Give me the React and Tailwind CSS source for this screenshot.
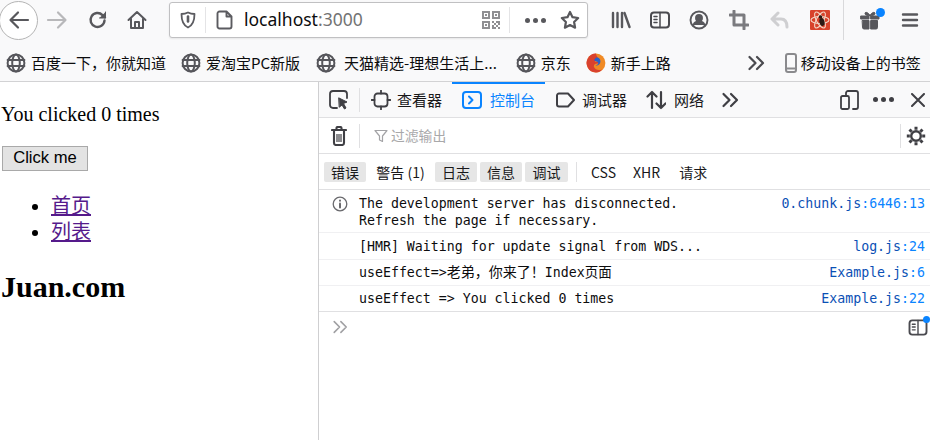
const Ic = ({ w = 20, h = 20, vb, children, sw = 2, c = "#4a4a4f", className = "" }) => (
  <svg width={w} height={h} viewBox={vb || `0 0 ${w} ${h}`} fill="none" stroke={c} strokeWidth={sw} strokeLinecap="round" strokeLinejoin="round" className={`shrink-0 ${className}`}>{children}</svg>
);
const Globe = () => (
  <Ic w={20} h={20} sw={2} c="#56565b"><circle cx="10" cy="10" r="8.4" /><ellipse cx="10" cy="10" rx="3.800" ry="8.400" /><path d="M1.600 7h16.800M1.600 13h16.800" /></Ic>
);
const Fox = () => (
  <svg width="20" height="20" viewBox="0 0 20 20" className="shrink-0">
    <circle cx="10" cy="10" r="9.400" fill="#f08a24" />
    <path d="M10 .6A9.400 9.400 0 0 0 2 15c1 2.500 4 4.400 8 4.400 3 0 5-1.400 6-3-3 1.400-7 .6-8-2.400-.6-2 1-3.400 3-3.400 1 0 2-.6 1.400-1.600L9 9l.6-3 2.400-1.400C11 3.600 10 2 10 .6z" fill="#d9412e" />
    <path d="M10 4.500c2.600-.6 4.800 1.600 4.400 4.600-.4 2.800-3 4-5 3.200 1.800-.2 2.800-1 2.800-2.300 0-1-1.300-1.500-2.800-1.700L8 7z" fill="#2a60c8" />
  </svg>
);
const Chevrons = ({ c = "#4a4a4f", w = 18, sw = 2.200 }) => (
  <Ic w={w} h={16} vb="0 0 18 16" sw={sw} c={c}><path d="M2.500 2l6 6-6 6M10 2l6 6-6 6" /></Ic>
);
const SideBar = ({ w = 20, h = 18 }) => (
  <Ic w={w} h={h} vb="0 0 20 18" sw={2}><rect x="1" y="1.500" width="18" height="15" rx="3" /><path d="M10 1.500v15M4 5.500h3M4 8.500h3M4 11.500h3" strokeWidth="1.500" /></Ic>
);
const Btn = ({ w = "w-10", children, className = "" }) => (
  <div className={`${w} h-full flex items-center justify-center shrink-0 ${className}`}>{children}</div>
);
const Bm = ({ icon, children, className = "", gap = "ml-[5px]" }) => (
  <div className={`flex items-center shrink-0 ${className}`}>{icon}<span className={`${gap} text-[15px] text-[#0c0c0d] whitespace-nowrap leading-none`}>{children}</span></div>
);
const Tab = ({ icon, children, className = "", active }) => (
  <div className={`h-full flex items-center shrink-0 ${className}`}>{icon}<span className={`text-[15px] whitespace-nowrap leading-none ${active ? "text-[#0a84ff]" : "text-[#18181a]"}`}>{children}</span></div>
);
const Chip = ({ on, children, className = "" }) => (
  <div className={`h-[20px] flex items-center justify-center rounded-[2px] text-[14px] leading-none text-[#18181a] whitespace-nowrap shrink-0 ${on ? "bg-[#e6e6e6]" : ""} ${className}`}>{children}</div>
);
const Src = ({ name, line }) => (
  <span className="whitespace-nowrap"><span className="text-[#0a50b5]">{name}</span><span className="text-[#0a84ff]">{line}</span></span>
);
const Row = ({ h, src, children, last }) => (
  <div className={`flex justify-between pl-[40px] pr-[5px] border-b ${last ? "border-[#e0e0e2]" : "border-[#f0f0f2]"} ${h}`}>
    <div className="whitespace-pre text-[#0c0c0d]">{children}</div>{src}
  </div>
);

export default function App() {
  return (
    <div className="w-[930px] h-[440px] overflow-hidden flex flex-col bg-white font-['Noto_Sans_CJK_SC','Noto_Sans',sans-serif]">
      <div className="h-[40px] bg-[#f9f9fa] flex items-center shrink-0">
        <div className="w-[39px] h-[39px] -ml-px rounded-full border border-[#b4b4b4] bg-white flex items-center justify-center shrink-0">
          <Ic w={22} h={20} sw={2.200} c="#58585c"><path d="M20 10H3M10 2.500L2.500 10l7.500 7.500" /></Ic>
        </div>
        <Btn className="-ml-[1px]"><Ic w={22} h={20} sw={2.200} c="#b8b8ba"><path d="M2 10h17M12 2.500l7.500 7.500-7.500 7.500" /></Ic></Btn>
        <Btn className="ml-[1px]"><Ic w={20} h={20} sw={2.400} c="#58585c"><path d="M16.500 10.500a7 7 0 1 1-2-5.400L17 7.500" /><path d="M17.500 2v6h-6" fill="#58585c" strokeWidth="1" /></Ic></Btn>
        <Btn className="-ml-[1px]"><Ic w={20} h={20} sw={2} c="#58585c"><path d="M1.500 10L10 2l8.500 8M4 8.500V18h12V8.500M8 18v-6h4v6" /></Ic></Btn>
        <div className="ml-[12px] w-[419px] h-[36px] bg-white border border-[#c0c0c2] rounded-[3px] flex items-center shrink-0 shadow-[0_1px_2px_rgba(0,0,0,0.08)]">
          <Btn w="w-[35px]"><Ic w={16} h={18} sw={1.800} c="#5b5b60"><path d="M8 1.500c2 1 4 1.500 6.500 1.500 0 6-1 11-6.500 13.500C2.500 14 1.500 9 1.500 3 4 3 6 2.500 8 1.500z" /><path d="M8 5.500v5" strokeWidth="2.600" /></Ic></Btn>
          <div className="w-px h-[26px] bg-[#e4e4e6]" />
          <Btn w="w-[37px]"><Ic w={17} h={20} sw={1.900} c="#5b5b60"><path d="M3.500 1.500h7l5 5v10a2 2 0 0 1-2 2h-10a2 2 0 0 1-2-2v-13a2 2 0 0 1 2-2zM10.500 1.500v5h5" /></Ic></Btn>
          <span className="text-[17.500px] leading-none font-['Noto_Sans'] text-[#0c0c0d] ml-[1px]">localhost<span className="text-[#737373]">:3000</span></span>
          <div className="flex-1" />
          <svg width="18" height="18" viewBox="0 0 18 18" className="shrink-0 mr-[9px]" fill="#8f8f92"><path d="M0 0h8v8H0zM2 2v4h4V2zM10 0h8v8h-8zM12 2v4h4V2zM0 10h8v8H0zM2 12v4h4v-4zM3 3h2v2H3zM13 3h2v2h-2zM3 13h2v2H3z" fillRule="evenodd" /><path d="M10 10h2v2h-2zM14 10h4v2h-4zM12 12h2v2h-2zM16 12h2v2h-2zM10 14h2v4h-2zM14 14h2v2h-2zM12 16h2v2h-2zM16 16h2v2h-2z" /></svg>
          <div className="w-px h-[26px] bg-[#e4e4e6]" />
          <div className="w-[50px] flex items-center justify-center gap-[3px] shrink-0">
            <span className="w-[5px] h-[5px] rounded-full bg-[#58585c]" /><span className="w-[5px] h-[5px] rounded-full bg-[#58585c]" /><span className="w-[5px] h-[5px] rounded-full bg-[#58585c]" />
          </div>
          <Ic w={20} h={20} sw={2.200} c="#58585c" className="mr-[7px]"><path d="M10 2l2.500 5.200 5.700.8-4.100 4 1 5.700L10 15l-5.100 2.700 1-5.700-4.100-4 5.700-.8z" /></Ic>
        </div>
        <Btn className="ml-[13px]"><Ic w={20} h={18} sw={2.400} c="#58585c"><path d="M2 2v14M6.500 2v14M11 2v14M13.500 2l5 14" /></Ic></Btn>
        <Btn w="w-[37px]" className="-mr-[1px]"><SideBar /></Btn>
        <Btn className="ml-[2px]"><Ic w={20} h={20} sw={1.900} c="#58585c"><circle cx="10" cy="10" r="8.500" /><circle cx="10" cy="8" r="3" fill="#58585c" /><path d="M4.500 15c1-3 3-3.500 5.500-3.500s4.500.5 5.500 3.500" fill="#58585c" /></Ic></Btn>
        <Btn><Ic w={20} h={20} sw={3} c="#7b7b7f"><path d="M5 1v14h14M1 5h14v14" /></Ic></Btn>
        <Btn className="ml-[1px]"><Ic w={20} h={18} sw={3} c="#cfcfd1"><path d="M8 2L2 8l6 6M3 8h8c4 0 6 3 6 8" /></Ic></Btn>
        <Btn>
          <svg width="20" height="20" viewBox="0 0 20 20">
            <rect width="20" height="20" rx="1" fill="#d8432b" />
            <g fill="none" stroke="#f3d8c8" strokeWidth="1.100"><ellipse cx="10" cy="10" rx="9" ry="3.500" /><ellipse cx="10" cy="10" rx="9" ry="3.500" transform="rotate(60 10 10)" /><ellipse cx="10" cy="10" rx="9" ry="3.500" transform="rotate(120 10 10)" /></g>
            <ellipse cx="12" cy="12" rx="2.500" ry="4" fill="#2a1a14" transform="rotate(-15 12 12)" />
            <circle cx="10.500" cy="7" r="1.800" fill="#2a1a14" />
          </svg>
        </Btn>
        <div className="w-px h-[40px] bg-[#d9d9db] ml-[3px]" />
        <Btn className="ml-[6px] relative">
          <Ic w={20} h={20} sw={1} c="#58585c"><path d="M1 6h8v3H1zM11 6h8v3h-8zM2.500 10.500h6.500V19H4a1.500 1.500 0 0 1-1.500-1.500zM11 10.500h6.500v7A1.500 1.500 0 0 1 16 19h-5zM10 5.500C8 2 5 1.500 5 3.500s3 2 5 2c2 0 5 0 5-2S12 2 10 5.500z" fill="#58585c" /></Ic>
          <span className="absolute w-[9px] h-[9px] rounded-full bg-[#0a84ff] left-[26px] top-[8px]" />
        </Btn>
        <Btn><Ic w={18} h={16} sw={2.400} c="#58585c"><path d="M2 2.500h14M2 8h14M2 13.500h14" /></Ic></Btn>
      </div>

      <div className="h-[42px] bg-[#f9f9fa] flex items-center pl-[6px] pt-[4px] shrink-0 border-b border-[#d2d2d4]">
        <Bm icon={<Globe />}>{"百度一下\uFF0C你就知道"}</Bm>
        <Bm icon={<Globe />} className="ml-[15px]">爱淘宝PC新版</Bm>
        <Bm icon={<Globe />} className="ml-[16px]" gap="ml-[8px]">天猫精选-理想生活上...</Bm>
        <Bm icon={<Globe />} className="ml-[19px]">京东</Bm>
        <Bm icon={<Fox />} className="ml-[15px]">新手上路</Bm>
        <div className="ml-[76px] shrink-0"><Chevrons /></div>
        <svg width="14" height="20" viewBox="0 0 14 20" fill="none" stroke="#8a8a8d" strokeWidth="2" className="ml-[19px] shrink-0"><rect x="2" y="1" width="10" height="18" rx="2" /><path d="M2 15.500h10" /></svg>
        <span className="ml-[3px] text-[15px] text-[#0c0c0d] whitespace-nowrap leading-none">移动设备上的书签</span>
      </div>

      <div className="flex-1 flex min-h-0">
        <div className="w-[319px] shrink-0 border-r border-[#cfcfd1] pl-[2px] font-['Liberation_Serif','Noto_Sans_CJK_SC',serif] text-[20px] text-black">
          <p className="mt-[21px] -ml-px leading-[23px]">You clicked 0 times</p>
          <button className="mt-[20px] block w-[86px] h-[25px] bg-[#e3e3e3] border border-[#a9a9a9] font-['Liberation_Sans'] text-[16.600px] leading-none text-black">Click me</button>
          <ul className="mt-[22px] pl-[49px] list-disc">
            <li className="h-[26px] leading-[26px]"><a className="underline text-[#551a8b]">首页</a></li>
            <li className="h-[26px] leading-[26px]"><a className="underline text-[#551a8b]">列表</a></li>
          </ul>
          <h1 className="mt-[25px] -ml-px text-[30px] font-bold leading-[34px]">Juan.com</h1>
        </div>

        <div className="flex-1 min-w-0 flex flex-col">
          <div className="h-[36px] bg-[#f9f9fa] border-b border-[#e0e0e2] flex items-center relative shrink-0">
            <div className="w-[40px] h-full flex items-center justify-center shrink-0">
              <Ic w={20} h={20} sw={1.800} c="#3f3f44"><path d="M8 18H4a3 3 0 0 1-3-3V4a3 3 0 0 1 3-3h11a3 3 0 0 1 3 3v4" /><path d="M10 8l8 4-3.500 1.500L17 18l-1.500 1-2.500-4-2.500 2z" fill="#3f3f44" strokeWidth="1" /></Ic>
            </div>
            <div className="w-px h-[24px] bg-[#e0e0e2] shrink-0" />
            <Tab className="ml-[11px]" icon={<Ic w={20} h={20} sw={1.800} c="#3f3f44" className="mr-[6px]"><rect x="3.500" y="3.500" width="13" height="13" rx="3" /><path d="M10 .5v3M10 16.500v3M.5 10h3M16.500 10h3" /></Ic>}>查看器</Tab>
            <Tab className="w-[93px] ml-[10px] pl-[10px]" active icon={<Ic w={20} h={18} sw={2} c="#0a84ff" className="mr-[8px]"><rect x="1" y="1" width="18" height="16" rx="3" /><path d="M7 5.500L10.500 9 7 12.500" /></Ic>}>控制台</Tab>
            <Tab className="ml-[11px]" icon={<Ic w={20} h={16} sw={2} c="#3f3f44" className="mr-[6px]"><path d="M3 1.500h9l6 6.500-6 6.500H3a2 2 0 0 1-2-2v-9a2 2 0 0 1 2-2z" /></Ic>}>调试器</Tab>
            <Tab className="ml-[19px]" icon={<Ic w={20} h={20} sw={2.200} c="#3f3f44" className="mr-[8px]"><path d="M6 18V2M1.500 6.500L6 2l4.500 4.500M15 2v16M10.500 13.500L15 18l4.500-4.500" /></Ic>}>网络</Tab>
            <div className="ml-[17px] shrink-0"><Chevrons c="#3f3f44" /></div>
            <div className="flex-1" />
            <Ic w={20} h={20} sw={1.800} c="#3f3f44" className="mr-[13px]"><path d="M6 5V3a2 2 0 0 1 2-2h8a2 2 0 0 1 2 2v14a2 2 0 0 1-2 2h-3" /><rect x="1" y="6" width="8" height="13" rx="1.500" /></Ic>
            <div className="flex items-center gap-[3px] shrink-0 mr-[17px]">
              <span className="w-[5px] h-[5px] rounded-full bg-[#3f3f44]" /><span className="w-[5px] h-[5px] rounded-full bg-[#3f3f44]" /><span className="w-[5px] h-[5px] rounded-full bg-[#3f3f44]" />
            </div>
            <Ic w={14} h={14} sw={2} c="#3f3f44" className="mr-[5px]"><path d="M1 1l12 12M13 1L1 13" /></Ic>
            <span className="absolute left-[133px] top-0 w-[93px] h-[2px] bg-[#0a84ff]" />
          </div>

          <div className="h-[36px] border-b border-[#e0e0e2] flex items-center shrink-0">
            <div className="w-[40px] h-full flex items-center justify-center shrink-0">
              <Ic w={16} h={20} sw={2.100} c="#3f3f44"><path d="M3 5v12a2 2 0 0 0 2 2h6a2 2 0 0 0 2-2V5M1 4h14M5.500 4V2a1 1 0 0 1 1-1h3a1 1 0 0 1 1 1v2" /><path d="M6 8v8M8 8v8M10 8v8" strokeWidth="1.200" strokeLinecap="butt" /></Ic>
            </div>
            <div className="w-px h-[24px] bg-[#e0e0e2] shrink-0" />
            <Ic w={14} h={14} sw={1.200} c="#a3a3a6" className="ml-[14px]"><path d="M1 1.500h12L8.500 7v5.500L5.500 11V7z" /></Ic>
            <span className="ml-[3px] text-[13.800px] leading-none text-[#a8a8aa]">过滤输出</span>
            <div className="flex-1" />
            <div className="w-px h-[24px] bg-[#e0e0e2] shrink-0" />
            <div className="w-[29px] flex items-center justify-center shrink-0">
              <Ic w={20} h={20} sw={2.400} c="#3f3f44"><circle cx="10" cy="10" r="4.800" /><g strokeWidth="3" strokeLinecap="butt"><path d="M10 .8v3M10 16.200v3M.8 10h3M16.200 10h3M3.500 3.500l2.200 2.200M14.300 14.300l2.200 2.200M3.500 16.500l2.200-2.200M14.300 5.700l2.200-2.200" /></g></Ic>
            </div>
          </div>

          <div className="h-[36px] border-b border-[#e0e0e2] flex items-center pl-[5px] shrink-0">
            <Chip on className="w-[42px]">错误</Chip>
            <Chip className="w-[49px] ml-[10px]">警告 (1)</Chip>
            <Chip on className="w-[42px] ml-[10px]">日志</Chip>
            <Chip on className="w-[42px] ml-[3px]">信息</Chip>
            <Chip on className="w-[43px] ml-[3px]">调试</Chip>
            <div className="w-px h-[20px] bg-[#e0e0e2] ml-[8px] shrink-0" />
            <Chip className="ml-[14px]">CSS</Chip>
            <Chip className="ml-[17px]">XHR</Chip>
            <Chip className="ml-[19px]">请求</Chip>
          </div>

          <div className="font-['DejaVu_Sans_Mono','Noto_Sans_CJK_SC',monospace] text-[13.250px] leading-[17px] shrink-0">
            <div className="relative">
              <div className="absolute left-[13px] top-[6px]"><Ic w={16} h={16} sw={1.300} c="#6a6a6e"><circle cx="8" cy="8" r="6.800" /><path d="M8 7.500v4" strokeWidth="2" /><path d="M8 4.500v.3" strokeWidth="2" /></Ic></div>
              <Row h="h-[43px] pt-[5px]" src={<Src name="0.chunk.js" line=":6446:13" />}>{"The development server has disconnected.\nRefresh the page if necessary."}</Row>
            </div>
            <Row h="h-[27px] pt-[5px]" src={<Src name="log.js" line=":24" />}>[HMR] Waiting for update signal from WDS...</Row>
            <Row h="h-[26px] pt-[4px]" src={<Src name="Example.js" line=":6" />}>useEffect=&gt;<span className="text-[14px]">{"老弟\uFF0C你来了\uFF01"}</span>Index<span className="text-[13.500px]">页面</span></Row>
            <Row last h="h-[26px] pt-[4px]" src={<Src name="Example.js" line=":22" />}>useEffect =&gt; You clicked 0 times</Row>
          </div>
          <div className="h-[30px] flex items-center justify-between pl-[13px] pr-[2px] relative shrink-0">
            <Chevrons c="#a0a0a3" w={16} sw={1.800} />
            <SideBar w={20} h={17} />
            <span className="absolute w-[7px] h-[7px] rounded-full bg-[#0a84ff] right-0 top-[4px]" />
          </div>
        </div>
      </div>
    </div>
  );
}
